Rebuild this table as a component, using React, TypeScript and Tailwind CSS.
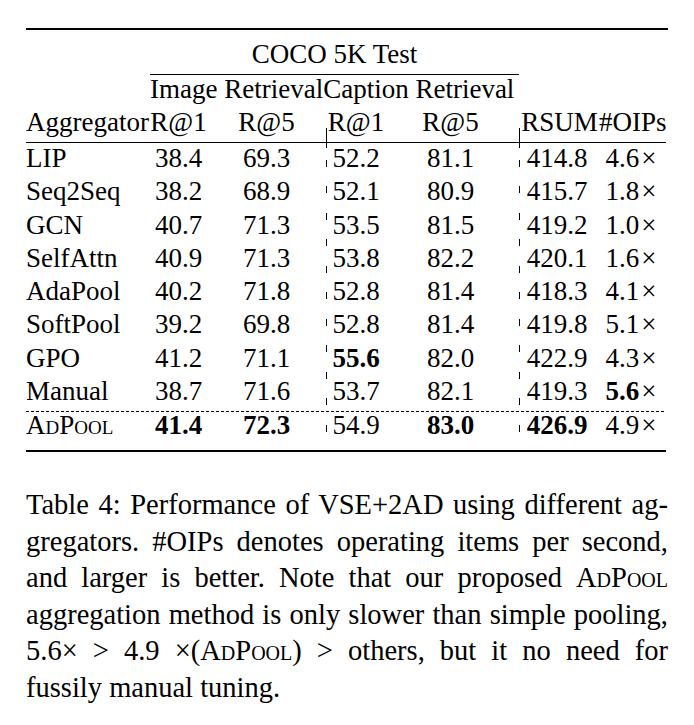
const rows = [
  ['LIP', '38.4', '69.3', '52.2', '81.1', '414.8', '4.6'],
  ['Seq2Seq', '38.2', '68.9', '52.1', '80.9', '415.7', '1.8'],
  ['GCN', '40.7', '71.3', '53.5', '81.5', '419.2', '1.0'],
  ['SelfAttn', '40.9', '71.3', '53.8', '82.2', '420.1', '1.6'],
  ['AdaPool', '40.2', '71.8', '52.8', '81.4', '418.3', '4.1'],
  ['SoftPool', '39.2', '69.8', '52.8', '81.4', '419.8', '5.1'],
  ['GPO', '41.2', '71.1', '55.6', '82.0', '422.9', '4.3'],
  ['Manual', '38.7', '71.6', '53.7', '82.1', '419.3', '5.6'],
];

// which cells are bold, by row name -> column index
const bold: Record<string, number[]> = {
  GPO: [3],
  Manual: [6],
};

function SmallCaps({ children }: { children: string }) {
  return <span className="[font-variant-caps:small-caps]">{children}</span>;
}

function VLine({ col }: { col: 'a' | 'b' }) {
  return (
    <div
      className={`${col === 'a' ? 'col-start-4' : 'col-start-7'} row-start-1 row-end-14 flex flex-col items-start`}
    >
      <div className="mt-[21px] h-[20px] w-px bg-black" />
      <div className="mt-[12px] w-px flex-1 bg-[repeating-linear-gradient(to_bottom,#000_0_7px,transparent_7px_26.5px)]" />
    </div>
  );
}

function Cells({ r, leading, boldAll }: { r: string[]; leading: string; boldAll?: number[] }) {
  const b = boldAll ?? bold[r[0]] ?? [];
  const w = (i: number) => (b.includes(i) ? 'font-bold' : '');
  return (
    <>
      <div className={leading}>{r[0] === 'AdPool' ? <SmallCaps>AdPool</SmallCaps> : r[0]}</div>
      <div className={`${leading} text-center ${w(1)}`}>{r[1]}</div>
      <div className={`${leading} text-center ${w(2)}`}>{r[2]}</div>
      <div className={`${leading} text-center ${w(3)}`}>{r[3]}</div>
      <div className={`${leading} text-center pr-[3px] ${w(4)}`}>{r[4]}</div>
      <div className={`${leading} text-center pr-[5px] ${w(5)}`}>{r[5]}</div>
      <div className={`${leading} text-center pr-[3px]`}>
        <span className={w(6)}>{r[6]}</span>
        <span className="ml-[2px]">×</span>
      </div>
    </>
  );
}

export default function App() {
  return (
    <div className="min-h-[725px] w-[694px] bg-white px-[26px] pt-[28px] [font-family:'Liberation_Serif',serif] text-black">
      {/* top rule */}
      <div className="h-[2px] bg-black" />

      {/* spanning headers */}
      <div className="ml-[124px] h-[44px] w-[369px] pt-[9px] text-center text-[27px] leading-[30px]">
        COCO 5K Test
      </div>
      <div className="ml-[124px] h-px w-[369px] bg-black" />
      <div className="ml-[124px] flex h-[32px] text-[27px] leading-[28px]">
        <span>Image Retrieval</span>
        <span>Caption Retrieval</span>
      </div>

      {/* main table */}
      <div className="grid grid-cols-[124px_57px_119px_1px_58px_134px_1px_79px_67px] grid-rows-[35px_1px_repeat(8,33.3px)_3px_38px_2px] text-[27px]">
        <VLine col="a" />
        <VLine col="b" />
        <div className="col-span-full row-start-2 bg-black" />
        <div className="col-span-full row-start-11 h-px self-end bg-[repeating-linear-gradient(to_right,#000_0_3px,transparent_3px_5px)]" />
        <div className="col-span-full row-start-13 bg-black" />

        <div className="leading-[30px]">Aggregator</div>
        <div className="text-center leading-[30px]">R@1</div>
        <div className="text-center leading-[30px]">R@5</div>
        <div className="text-center leading-[30px]">R@1</div>
        <div className="pr-[3px] text-center leading-[30px]">R@5</div>
        <div className="text-center leading-[30px]">RSUM</div>
        <div className="text-center leading-[30px]">#OIPs</div>

        {rows.map((r) => (
          <Cells key={r[0]} r={r} leading="leading-[30px]" />
        ))}

        <Cells
          r={['AdPool', '41.4', '72.3', '54.9', '83.0', '426.9', '4.9']}
          leading="leading-[26px]"
          boldAll={[1, 2, 4, 5]}
        />
      </div>

      {/* caption */}
      <div className="mt-[34.6px] text-[28.5px] leading-[36.6px]">
        <div className="whitespace-nowrap text-justify [text-align-last:justify]">
          Table 4: Performance of VSE+2AD using different ag-
        </div>
        <div className="whitespace-nowrap text-justify [text-align-last:justify]">
          gregators. #OIPs denotes operating items per second,
        </div>
        <div className="whitespace-nowrap text-justify [text-align-last:justify]">
          and larger is better. Note that our proposed <SmallCaps>AdPool</SmallCaps>
        </div>
        <div className="whitespace-nowrap text-justify [text-align-last:justify] [word-spacing:-1px]">
          aggregation method is only slower than simple pooling,
        </div>
        <div className="whitespace-nowrap text-justify [text-align-last:justify]">
          5.6× &gt; 4.9 ×(<SmallCaps>AdPool</SmallCaps>) &gt; others, but it no need for
        </div>
        <div>fussily manual tuning.</div>
      </div>
    </div>
  );
}
